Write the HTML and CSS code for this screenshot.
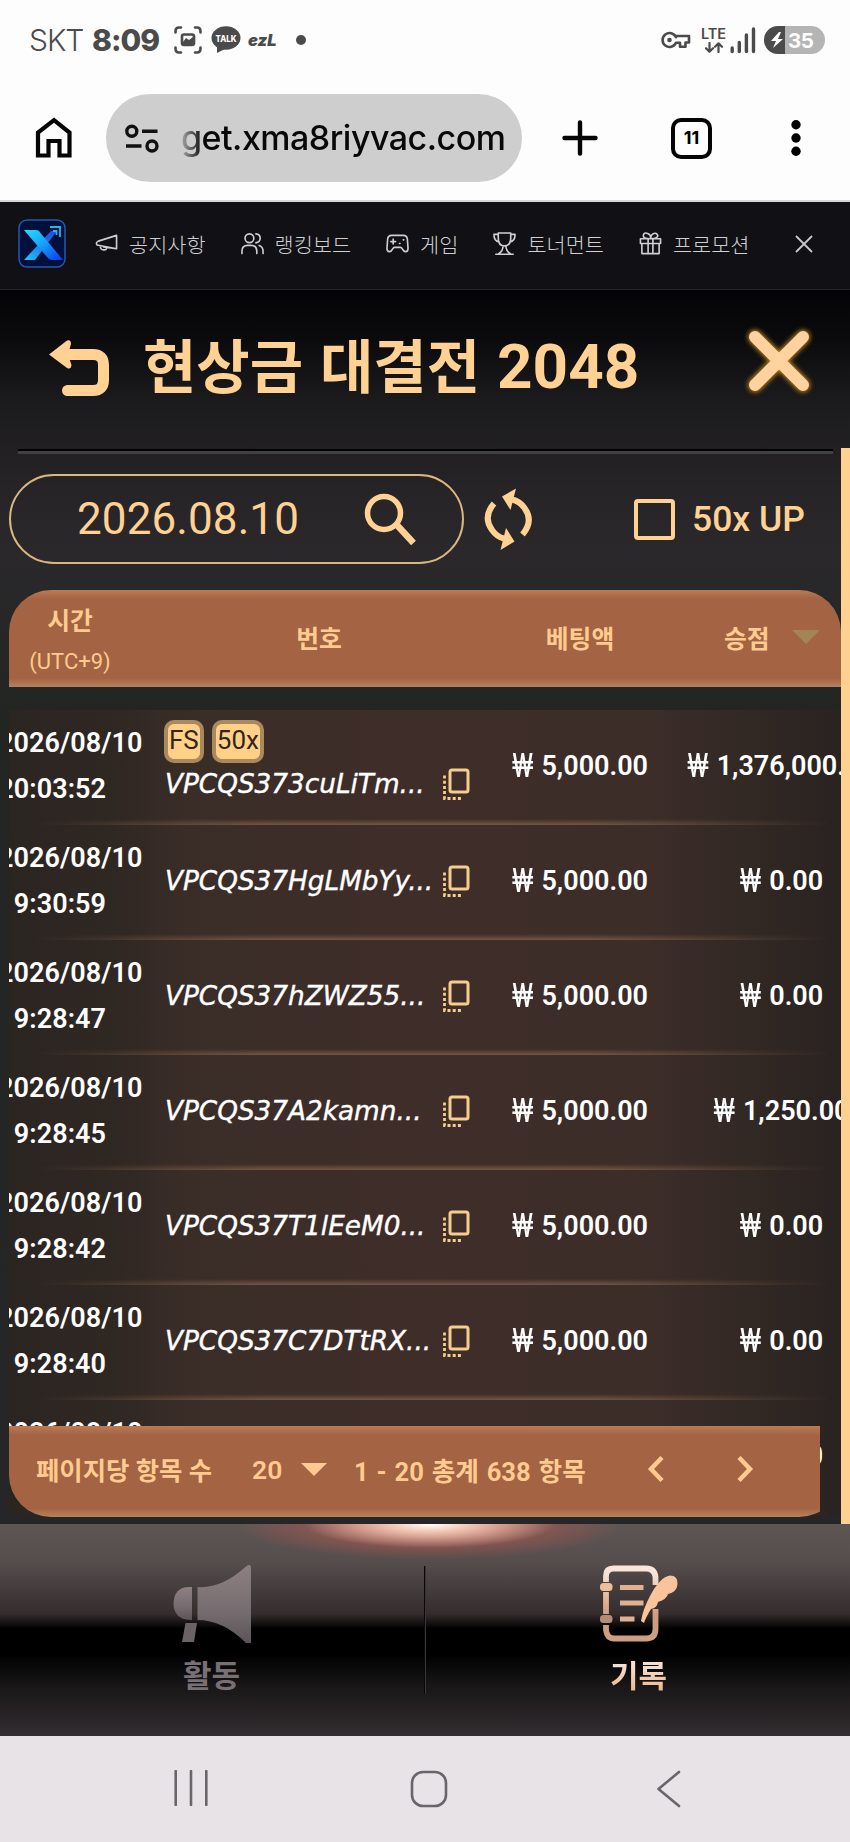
FILE: index.html
```html
<!DOCTYPE html>
<html lang="ko">
<head>
<meta charset="utf-8">
<title>현상금 대결전 2048</title>
<link rel="stylesheet" href="styles.css">
</head>
<body>
<div class="phone">
  <header class="status">
    <span class="carrier">SKT</span>
    <span class="clock">8:09</span>
    <svg class="st-shot" width="28" height="28" viewBox="0 0 28 28" fill="none" stroke="#4b4b4b" stroke-width="2.6" stroke-linecap="round"><path d="M1.5 6.500V5q0-3.500 3.500-3.500H7M21 1.500h2q3.500 0 3.500 3.500v1.500M26.500 21.500V23q0 3.500-3.500 3.500h-2M7 26.500H5q-3.500 0-3.500-3.500v-1.500"/><rect x="8" y="8.500" width="12" height="10.500" rx="2"/><path d="M9 16l3-4 3 2 4-3v7H9z" fill="#4b4b4b" stroke="none" /></svg>
    <svg class="st-talk" width="30" height="28" viewBox="0 0 30 28"><ellipse cx="15" cy="12" rx="14.500" ry="11.700" fill="#4b4b4b"/><path d="M6 20l0 7 8-4z" fill="#4b4b4b"/><text x="15" y="15.800" text-anchor="middle" textLength="21" lengthAdjust="spacingAndGlyphs" class="talk-text">TALK</text></svg>
    <span class="ezl">ezL</span>
    <span class="dot"></span>
    <div class="st-right">
      <svg width="30" height="18" viewBox="0 0 30 18" fill="none" stroke="#4b4b4b" stroke-width="2.600" stroke-linejoin="round"><path d="M15 6.200A7 7 0 1 0 15 11.800H19V15.800H24.500V11.500H28V5H15z"/><circle cx="8.500" cy="9" r="2.300" fill="#4b4b4b" stroke="none"/></svg>
      <div class="lte"><b>LTE</b><svg width="18" height="11" viewBox="0 0 18 11" fill="none" stroke="#4b4b4b" stroke-width="2.200" stroke-linecap="round" stroke-linejoin="round"><path d="M4.500 1v8.500M1 6.200l3.500 3.500L8 6.200M13.500 10V1.500M10 4.800l3.500-3.500L17 4.800"/></svg></div>
      <svg class="signal" width="26" height="27" viewBox="0 0 26 27" stroke="#4b4b4b" stroke-width="3.400" stroke-linecap="round"><path d="M2.200 21v3.500M9.300 15.500v9M16.400 8v16.500M23.500 2v22.500"/></svg>
      <div class="battery"><svg width="21" height="28" viewBox="0 0 21 28"><path d="M15 6L7 15h5l-3 7 10-9h-5l3-7z" fill="#fff"/></svg><b>35</b></div>
    </div>
  </header>

  <div class="browser">
    <svg class="home" width="38" height="42" viewBox="0 0 38 42" fill="none" stroke="#050505" stroke-width="4.200"><path d="M3 38.500V15.500L19 3.200 34.500 15.500V38.500H24.500V24H13.500V38.500z"/></svg>
    <div class="url">
      <svg width="34" height="29" viewBox="0 0 34 29" fill="none" stroke="#111" stroke-width="3.400"><circle cx="6.800" cy="7.200" r="5"/><path d="M17 7.200h15.500M1 22h15.500"/><circle cx="27" cy="22" r="5"/></svg>
      <span class="url-text">get.xma8riyvac.com</span>
    </div>
    <svg class="plus" width="36" height="36" viewBox="0 0 36 36" stroke="#050505" stroke-width="4.400" stroke-linecap="round"><path d="M18 2.500v31M2.500 18h31"/></svg>
    <div class="tabs">11</div>
    <svg class="kebab" width="10" height="36" viewBox="0 0 10 36"><circle cx="5" cy="4.800" r="4.700"/><circle cx="5" cy="18" r="4.700"/><circle cx="5" cy="31.200" r="4.700"/></svg>
  </div>

  <nav class="sitenav">
    <svg class="logo" width="48" height="49" viewBox="0 0 48 49">
      <defs>
        <linearGradient id="lx" x1="0" y1="0" x2="1" y2="1"><stop offset="0" stop-color="#25e0fb"/><stop offset=".5" stop-color="#189cf8"/><stop offset="1" stop-color="#0b35f0"/></linearGradient>
        <linearGradient id="lb" x1="1" y1="0" x2="0" y2="1"><stop offset="0" stop-color="#1b4fe0"/><stop offset=".45" stop-color="#1a74ee"/><stop offset="1" stop-color="#22c8fb"/></linearGradient>
      </defs>
      <rect x="1" y="1" width="46" height="47" rx="8" fill="#04103c" stroke="#2458b0" stroke-width="1.500"/>
      <path d="M33 12h6L17 41H6z" fill="url(#lb)"/>
      <path d="M6 11h12q3 0 4.500 3L45 41H34q-3 0-5-3z" fill="url(#lx)"/>
      <path d="M32 8h10v10M35 12h3.500v4" fill="none" stroke="#25b5e8" stroke-width="1.800"/>
    </svg>
    <div class="navitem"><svg viewBox="0 0 24 24"><path d="M22.500 3.500v14L9 15.500M22.500 3.500L3.500 9.500q-3 1.500-1.500 4l20.500 4M5.500 14.500q0 4.500 4 4.200 3 0 2.500-3.200"/></svg>공지사항</div>
    <div class="navitem"><svg viewBox="0 0 24 24"><circle cx="8.800" cy="6.500" r="4.600"/><path d="M1 22.500v-2.500q0-6 6-6h3.500q6 0 6 6v2.500M15.500 2q4.500.5 4.500 4.500t-4.500 4.800M19 14q4 1.500 4 6v2.500"/></svg>랭킹보드</div>
    <div class="navitem"><svg viewBox="0 0 24 24"><path d="M6 3.500h12q4 0 4.300 4l.7 9.500q0 3.500-2.500 3.500-2 0-3.500-3-.8-1.500-2-1.500H9q-1.200 0-2 1.500-1.500 3-3.500 3Q1 20.500 1 17L1.700 7.500Q2 3.500 6 3.500zM5 10h5M7.500 7.500v5M14 12h.6M18 8.200h.6"/></svg>게임</div>
    <div class="navitem"><svg viewBox="0 0 24 24"><path d="M5.500 1h13v5.500q0 8-6.500 8t-6.500-8zM5.500 2.500H1q0 7 5.500 8M18.500 2.500H23q0 7-5.500 8M10.500 14.500q0 5-4.500 8M13.500 14.500q0 5 4.500 8M3 23.200h18"/></svg>토너먼트</div>
    <div class="navitem"><svg viewBox="0 0 24 24"><path d="M1.500 7h21v5h-21zM3 12h18v10.500H3zM9.500 7v15.500M14.500 7v15.500M12 7Q4 7 4.500 3.500T9 1.500 12 7q.5-4.500 3.500-5.500t4 2T12 7"/></svg>프로모션</div>
    <svg class="navx" width="18" height="18" viewBox="0 0 18 18" stroke="#c9c9cb" stroke-width="1.800"><path d="M1 1l16 16M17 1L1 17"/></svg>
  </nav>

  <main class="panel">
    <div class="titlebar">
      <svg class="back" width="62" height="58" viewBox="0 0 62 58"><path d="M17 15.500H45Q55.500 15.500 55.500 26V41Q55.500 51.500 45 51.500H19.500" fill="none" stroke="#ffd193" stroke-width="11" stroke-linecap="round"/><path d="M1 15.500L19 1.500Q23 0 23 5L20 15.500 23.500 26Q23 31 19 29z" fill="#ffd193"/></svg>
      <h1>현상금 대결전 <span>2048</span></h1>
      <svg class="close" width="76" height="76" viewBox="0 0 76 76"><g stroke-linecap="round"><path d="M14 14l48 48M62 14L14 62" stroke="#c98a1e" stroke-width="14" class="glow"/><path d="M14 14l48 48M62 14L14 62" stroke="#ffd2a0" stroke-width="12"/></g></svg>
    </div>
    <div class="rule"></div>

    <div class="content">
      <div class="filters">
        <div class="date">
          <span>2026.08.10</span>
          <svg width="54" height="54" viewBox="0 0 54 54" fill="none" stroke="#ffd193"><circle cx="21" cy="21" r="16.500" stroke-width="5.500"/><path d="M33 32L50.500 51" stroke-width="6.500"/></svg>
        </div>
        <svg class="refresh" width="48" height="62" viewBox="0 0 48 62" fill="none" stroke="#ffd193" stroke-width="6"><path d="M10 15.500Q-1.500 29 8 42 13 49 20 50.500"/><path d="M38.500 46.500Q50 33 40.500 20 35.500 13 28 11.500"/><path d="M18 8.500L32 .5 26.500 22zM30.500 53.500L16.500 62 22 40z" fill="#ffd193" stroke="none"/></svg>
        <div class="check"></div>
        <span class="check-label">50x UP</span>
      </div>

      <div class="thead">
        <div class="th-time"><b>시간</b><span>(UTC+9)</span></div>
        <b>번호</b>
        <b>베팅액</b>
        <div class="th-win"><b>승점</b><i class="tri dim"></i></div>
      </div>

      <div class="rows" id="rows"></div>

      <div class="pager">
        <div class="pager-bar">
          <b class="per">페이지당 항목 수</b>
          <b class="count">20</b>
          <i class="tri"></i>
          <b class="range">1 - 20 총계 638 항목</b>
          <svg class="prev" width="18" height="28" viewBox="0 0 18 28"><path d="M15 2.500L4 14l11 11.500"/></svg>
          <svg class="next" width="18" height="28" viewBox="0 0 18 28"><path d="M3 2.500L14 14 3 25.500"/></svg>
        </div>
      </div>
      <div class="scrollbar"></div>
    </div>
  </main>

  <footer class="gamenav">
    <div class="tab off">
      <svg width="78" height="78" viewBox="0 0 78 78"><defs><linearGradient id="mg" x1="0" y1="0" x2="0" y2="1"><stop offset="0" stop-color="#8d8081"/><stop offset=".6" stop-color="#756c70"/><stop offset="1" stop-color="#5b5357"/></linearGradient></defs><g fill="url(#mg)"><path d="M19 22v33H17Q1 54 .5 39 1 22 16 22z"/><path d="M24.500 22Q48 24 73 1.500 78-2 78 3V78H73Q50 55 24.500 55z"/></g><path d="M12.500 58H24L21 77H9z" fill="#6b6266"/></svg>
      <b>활동</b>
    </div>
    <div class="divider"></div>
    <div class="tab on">
      <svg width="78" height="78" viewBox="0 0 78 78"><defs><linearGradient id="ng" gradientUnits="userSpaceOnUse" x1="0" y1="0" x2="0" y2="78"><stop offset="0" stop-color="#fbe9dd"/><stop offset=".15" stop-color="#f6e0d3"/><stop offset=".3" stop-color="#f2c6a2"/><stop offset=".65" stop-color="#cc9c81"/><stop offset="1" stop-color="#cf9f80"/></linearGradient></defs>
        <g fill="none" stroke="url(#ng)" stroke-width="5.800"><path d="M6 17V11Q6 3.500 13.500 3.500H46Q54.500 3.500 55.500 12V20M6 27V49M6 60V65Q7 73.500 14 73.500H46Q55.500 73.500 55.500 64V44"/></g>
        <path d="M20 20h23.500v5H20zM20 35.500h23.500v5H20zM20 51.500h14.500v5H20z" fill="#dfb191"/>
        <rect x="0" y="18" width="12.500" height="8" rx="3.500" fill="#eebf98"/><rect x="0" y="50" width="12.500" height="8" rx="3.500" fill="#b68c77"/>
        <path d="M41 56Q43 44 50 31 60 12 70 10.500 78 10.500 77.500 19 77 27 68 29 67 34 58 37 57 43 51 44 46 52 44 58z" fill="#f9c39b"/></svg>
      <b>기록</b>
    </div>
  </footer>

  <div class="sysnav">
    <svg width="34" height="36" viewBox="0 0 34 36"><path d="M1.700 1v34M17 1v34M32.300 1v34"/></svg>
    <svg class="syshome" width="38" height="38" viewBox="0 0 38 38"><rect x="2" y="2" width="34" height="34" rx="11"/></svg>
    <svg width="25" height="38" viewBox="0 0 25 38"><path d="M23 2L2.500 19 23 36"/></svg>
  </div>
</div>
<script src="rows.js"></script>
</body>
</html>
```
FILE: rows.js
```js
const records = [
  { time: '20:03:52', id: 'VPCQS373cuLiTm...', bet: '5,000.00', win: '1,376,000.00', tags: ['FS', '50x'] },
  { time: '9:30:59', id: 'VPCQS37HgLMbYy...', bet: '5,000.00', win: '0.00' },
  { time: '9:28:47', id: 'VPCQS37hZWZ55...', bet: '5,000.00', win: '0.00' },
  { time: '9:28:45', id: 'VPCQS37A2kamn...', bet: '5,000.00', win: '1,250.00' },
  { time: '9:28:42', id: 'VPCQS37T1lEeM0...', bet: '5,000.00', win: '0.00' },
  { time: '9:28:40', id: 'VPCQS37C7DTtRX...', bet: '5,000.00', win: '0.00' },
  { time: '', id: '', bet: '', win: '0.00' }
];

const copyIcon = '<svg class="copy" width="28" height="32" viewBox="0 0 28 32" fill="none" stroke="#f6cd8c"><rect x="8" y="2" width="18" height="22" rx="2" stroke-width="3"/><path d="M2.500 7.500V30.500H21" stroke-width="2.800" stroke-dasharray="3 2.200"/></svg>';
const money = (value, cls) => `<div class="money ${cls}">${value ? `<span class="won">₩</span>${value}` : ''}</div>`;

document.getElementById('rows').innerHTML = records.map(r => `
  <div class="row">
    <div class="when"><span>2026/08/10</span><span class="hms">${r.time}</span></div>
    <div class="number">
      ${r.tags ? `<div class="tags">${r.tags.map(t => `<span>${t}</span>`).join('')}</div>` : ''}
      <div class="idline"><em>${r.id}</em>${r.id ? copyIcon : ''}</div>
    </div>
    ${money(r.bet, 'bet')}
    ${money(r.win, 'win')}
  </div>`).join('');
```
FILE: styles.css
```css
* { box-sizing: border-box; }
body { margin: 0; background: #fdfdfd; font-family: Roboto, "Noto Sans CJK KR", sans-serif; }
svg { display: block; flex: none; }
.phone { width: 850px; height: 1842px; overflow: hidden; display: flex; flex-direction: column; }

.status { height: 80px; display: flex; align-items: center; padding: 0 25px 0 29px; color: #4b4b4b; font-family: Inter, sans-serif; flex: none; }
.carrier { font-size: 30px; font-weight: 300; letter-spacing: -1px; width: 63px; white-space: nowrap; }
.clock { font-size: 30px; font-weight: 800; width: 82px; letter-spacing: -1px; white-space: nowrap; }
.st-talk { margin-left: 9px; }
.talk-text { font: 800 9.5px Inter, sans-serif; fill: #fff; }
.ezl { font-size: 16.5px; font-weight: 900; font-style: italic; margin-left: 7px; width: 48px; line-height: 20px; }
.dot { width: 10px; height: 10px; border-radius: 50%; background: #4b4b4b; }
.st-right { margin-left: auto; display: flex; align-items: center; }
.lte { margin-left: 9px; width: 27px; display: flex; flex-direction: column; align-items: center; gap: 2px; }
.lte b { font-size: 14.5px; line-height: 13px; font-weight: 600; }
.signal { margin-left: 3px; }
.battery { margin-left: 8px; width: 61px; height: 28px; border-radius: 14px; background: linear-gradient(90deg, #4b4b4b 21px, #b5b5b5 21px); display: flex; align-items: center; color: #fff; font-size: 20.5px; }
.battery b { margin-left: 3px; font-weight: 700; letter-spacing: -.4px; }

.browser { height: 122px; display: flex; align-items: flex-start; padding: 14px 49px 0 35px; border-bottom: 2px solid #d6d6d8; flex: none; }
.home { margin-top: 23px; }
.url { margin-left: 33px; width: 416px; height: 88px; border-radius: 44px; background: #cecece; display: flex; align-items: center; padding-left: 19px; }
.url-text { margin-left: 22px; font: 500 34px Inter, sans-serif; letter-spacing: -.5px; line-height: 44px; white-space: nowrap; background: linear-gradient(90deg, #aaa 0, #080808 22px); color: transparent; -webkit-background-clip: text; background-clip: text; }
.plus { margin: 26px 0 0 40px; }
.tabs { margin: 24px 0 0 73px; width: 41px; height: 41px; border: 4.500px solid #050505; border-radius: 10px; font: 700 18px/32px Inter, sans-serif; text-align: center; }
.kebab { margin: 26px 0 0 auto; }

.sitenav { height: 88px; background: #111014; border-bottom: 1px solid #232226; display: flex; align-items: center; padding: 0 0 4px 18px; flex: none; }
.logo { margin-right: 29px; }
.navitem { display: flex; align-items: center; gap: 11px; margin-right: 35px; color: #cfcfd1; font: 300 20.8px/30px "Noto Sans CJK KR", sans-serif; white-space: nowrap; }
.navitem svg { width: 23px; height: 23px; fill: none; stroke: #cfcfd1; stroke-width: 1.7; stroke-linecap: round; stroke-linejoin: round; }
.navx { margin-left: 11px; }

.panel { flex: none; height: 1234px; background: linear-gradient(180deg, #040306 0, #0b0a0c 50px, #1b1a1c 110px, #262427 200px, #2a282b 260px, #232523 420px, #262628 1234px); }
.titlebar { height: 159px; display: flex; padding-left: 48px; }
.back { margin-top: 49px; }
h1 { margin: 34px 0 0 33px; width: 598px; font-size: 58px; line-height: 86px; font-weight: 700; word-spacing: 2.5px; color: #ffd193; white-space: nowrap; }
h1 span { font-size: 62px; }
.close { margin-top: 33px; }
.glow { filter: blur(2.5px); }
.rule { height: 5px; margin: 0 17px 0 18px; border-top: 2px solid #000; background: #403f41; }

.content { position: relative; height: 1076px; margin-top: -6px; padding: 26px 9px 0; overflow: hidden; }
.scrollbar { position: absolute; right: 0; top: 0; width: 9px; height: 1080px; background: #ffd190; }
.filters { display: flex; align-items: center; height: 90px; color: #ffd193; }
.date { width: 455px; height: 90px; border: 2px solid #d9b77f; border-radius: 45px; display: flex; align-items: center; padding-left: 66px; font-size: 44px; letter-spacing: .1px; }
.date span { width: 286px; }
.refresh { margin-left: 20px; }
.check { margin-left: 102px; width: 41px; height: 41px; border: 4px solid #ffd193; border-radius: 4px; }
.check-label { margin-left: 17px; font-size: 35.5px; font-weight: 500; white-space: nowrap; }
.thead { margin-top: 26px; height: 97px; border-radius: 42px 42px 0 0; background: linear-gradient(180deg, #ba7b58 0, #a46342 9px, #a46342 calc(100% - 9px), #b5825b 100%); display: grid; grid-template-columns: 122px 376px 146px 188px; align-items: center; text-align: center; color: #ffcb90; font-size: 24.800px; overflow: hidden; padding-bottom: 4px; }
.th-time { display: flex; flex-direction: column; font-size: 24.800px; line-height: 40px; padding-top: 10px; }
.th-time span { font-size: 22px; }
.th-win { display: flex; align-items: center; padding-left: 71px; gap: 22px; }
.tri { border: 14px solid transparent; border-bottom: 0; border-top: 14px solid #ffcb90; }
.tri.dim { border-top-color: #a18655; }

.rows { margin-top: 23px; overflow: hidden; height: 814px; width: 832px; }
.row { position: relative; height: 115px; padding-bottom: 4px; display: grid; grid-template-columns: 122px 376px 146px 188px; align-items: center; color: #fff; background: linear-gradient(90deg, #2b2522 0, #2f2722 100px, #3a2d28 180px, #3f2d29 420px, #3c2d29 640px, #302723 760px, #292321 100%); }
.row::after { content: ""; position: absolute; left: 0; right: 0; bottom: 0; height: 6px; background: linear-gradient(0deg, #755844, rgba(117, 88, 68, 0)); -webkit-mask-image: linear-gradient(90deg, transparent 3%, #000 30%, #000 70%, transparent 99%); mask-image: linear-gradient(90deg, transparent 3%, #000 30%, #000 70%, transparent 99%); }
.when { font-size: 27px; line-height: 46px; font-weight: 600; letter-spacing: .05px; display: flex; flex-direction: column; align-items: flex-start; margin-left: -11px; width: 146px; white-space: nowrap; }
.hms { width: 108px; height: 46px; text-align: right; }
.number { padding-left: 34px; display: flex; flex-direction: column; }
.tags { display: flex; gap: 8px; margin: -9px 0 3px -1px; }
.tags span { height: 43px; border: 4px solid #aa8a5d; border-radius: 10px; background: #ffd088; color: #33251b; font-size: 26px; line-height: 33px; padding: 0 1px; text-align: center; }
.idline { display: flex; align-items: center; justify-content: space-between; width: 305px; height: 36px; }
.row em { font: italic 400 26.3px/36px "DejaVu Sans", sans-serif; -webkit-text-stroke: .4px #fff; white-space: nowrap; }
.money { display: flex; align-items: center; justify-content: center; font-size: 27px; font-weight: 600; white-space: nowrap; }
.won { font-weight: 400; font-size: 29px; line-height: 32px; margin-right: 8px; font-family: Roboto, sans-serif; transform: scaleY(1.15); }
.win { margin-left: 69px; }

.pager { position: absolute; left: 9px; top: 978px; width: 811px; height: 91px; overflow: hidden; }
.pager-bar { width: 832px; height: 91px; border-radius: 0 0 42px 42px; background: linear-gradient(180deg, #ba7b58 0, #a46342 9px, #a46342 calc(100% - 9px), #b5825b 100%); display: flex; align-items: center; padding: 0 0 5px 27px; color: #ffcb90; font-size: 25.400px; white-space: nowrap; }
.per { width: 216px; }
.count { width: 49px; font-weight: 600; font-size: 26.5px; }
.pager-bar .tri { border-width: 13px 13px 0; margin-right: 27px; }
.range { width: 293px; font-size: 25.600px; word-spacing: 1.5px; }
.pager-bar path { fill: none; stroke: #ffcb90; stroke-width: 4.5; }
.next { margin-left: 71px; }

.gamenav { height: 212px; flex: none; display: flex; justify-content: center; background: radial-gradient(ellipse 125px 24px at 430px 0, #fff 0, rgba(255, 220, 200, .85) 30%, rgba(230, 130, 105, 0) 100%), radial-gradient(ellipse 195px 36px at 430px 0, rgba(205, 100, 82, .95) 0, rgba(185, 88, 78, .65) 45%, rgba(160, 80, 75, 0) 100%), linear-gradient(180deg, #5d5654 0, #544d4c 40px, #342c2d 90px, #000 105px, #000 130px, #171516 160px, #332e31 212px); }
.tab { width: 78px; padding-top: 41px; display: flex; flex-direction: column; align-items: center; }
.tab b { font-size: 31px; line-height: 40px; margin-top: 14px; white-space: nowrap; }
.off { margin-right: 173px; }
.off b { color: #787074; }
.on { margin-left: 174px; }
.on b { background: linear-gradient(180deg, #f5dfd4 20%, #edba90 80%); color: transparent; -webkit-background-clip: text; background-clip: text; }
.divider { width: 2px; height: 128px; margin-top: 42px; background: linear-gradient(90deg, #0b0a0a 50%, #383436 50%); }

.sysnav { height: 106px; flex: none; background: #e7e3e7; display: flex; align-items: flex-start; padding: 34px 169px 0 174px; }
.syshome { margin: 0 208px 0 202px; }
.sysnav svg { fill: none; stroke: #69656a; stroke-width: 2.6; stroke-linecap: round; stroke-linejoin: round; }
```
